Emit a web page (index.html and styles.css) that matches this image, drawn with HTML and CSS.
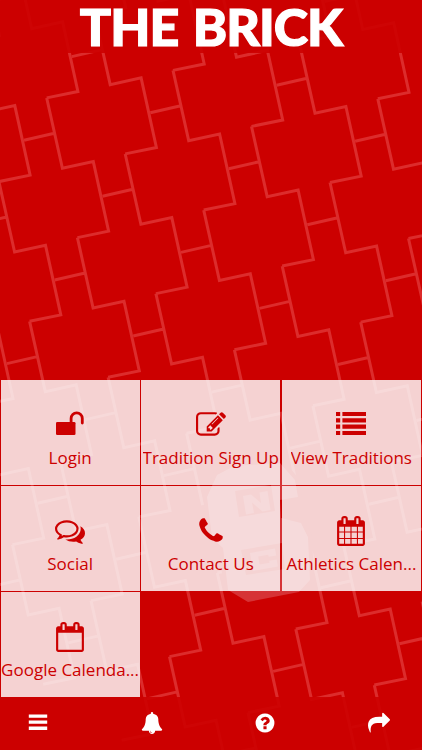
FILE: index.html
```
<!DOCTYPE html>
<html lang="en">
<head>
    <meta charset="UTF-8">
    <meta name="viewport" content="width=device-width, initial-scale=1.0">
    <title>The Brick</title>
    <link rel="stylesheet" href="styles.css">
</head>
<body>
    <div class="app">
        <!-- brick pattern -->
        <svg class="pattern" viewBox="0 0 422 750" aria-hidden="true">
            <defs>
                <path id="brick" d="M0 0l15.7 70.3 30.9-6.7 15.3 69.6-31.2 6.4M-22.7 42.3l30.4-7"/>
                <g id="chain">
                    <use href="#brick" x="-92.1" y="-419"/>
                    <use href="#brick" x="-61.4" y="-279.3"/>
                    <use href="#brick" x="-30.7" y="-139.7"/>
                    <use href="#brick"/>
                    <use href="#brick" x="30.7" y="139.7"/>
                    <use href="#brick" x="61.4" y="279.3"/>
                    <use href="#brick" x="92.1" y="419"/>
                    <use href="#brick" x="122.8" y="558.6"/>
                </g>
            </defs>
            <g class="lines">
                <use href="#chain" x="-188.8" y="-70.1"/>
                <use href="#chain" x="-110.3" y="-14"/>
                <use href="#chain" x="-31.8" y="42"/>
                <use href="#chain" x="46.7" y="98"/>
                <use href="#chain" x="125.2" y="154"/>
                <use href="#chain" x="203.7" y="210.1"/>
                <use href="#chain" x="282.2" y="266.1"/>
                <use href="#chain" x="360.7" y="322.2"/>
                <use href="#chain" x="439.2" y="378.2"/>
            </g>
            <path class="logo" d="M217 475L234 466 280 463 295 480 298 497 280 500 281 518 301 523 308 537 310 580 299 592 248 602 228 590 223 548 212 538 207 497Z"/>
            <path class="logo-cut" d="M235 491L271 485 275 511 239 517ZM241 550L282 543 285 569 246 575Z"/>
            <path class="logo-fill" d="M243 496l8-1.5 10 8.5-1.5-10.5 8-1.5 3 19-8 1.5-10.5-9 2 10.5-8 1.5zM250 553l25-4.5 1.2 7-7.5 1.3-.5-2-10 1.8 1.4 8 10-1.8-.4-2 7.5-1.3 1.2 7-25 4.5z"/>
        </svg>

        <header class="header">
            <h1>THE BRICK</h1>
        </header>

        <main class="menu">
            <a class="tile" href="#">
                <svg class="icon" viewBox="0 0 30 30"><rect x="1" y="12" width="19.5" height="13" rx="1.3"/><path d="M15.8 12.5V8.2a5.6 5.6 0 0 1 11.2 0v4.6" transform="translate(.3 .3)" fill="none" stroke="currentColor" stroke-width="2.8" stroke-linecap="round"/></svg>
                <span>Login</span>
            </a>
            <a class="tile" href="#">
                <svg class="icon" viewBox="0 0 1792 1792"><path d="M888 1184l116-116-152-152-116 116v56h96v96h56zm440-720q-16-16-33 1l-350 350q-17 17-1 33t33-1l350-350q17-17 1-33zm80 594v190q0 119-84.5 203.5t-203.5 84.5h-832q-119 0-203.5-84.5t-84.5-203.5v-832q0-119 84.5-203.5t203.5-84.5h832q63 0 117 25 15 7 18 23 3 17-9 29l-49 49q-14 14-32 8-23-6-45-6h-832q-66 0-113 47t-47 113v832q0 66 47 113t113 47h832q66 0 113-47t47-113v-126q0-13 9-22l64-64q15-15 35-7t20 29zm-96-738l288 288-672 672h-288v-288zm444 132l-92 92-288-288 92-92q28-28 68-28t68 28l152 152q28 28 28 68t-28 68z"/></svg>
                <span>Tradition Sign Up</span>
            </a>
            <a class="tile" href="#">
                <svg class="icon" viewBox="0 0 30 30"><path d="M0 2h4.2v4.1H0zM6.4 2H30v4.1H6.4zM0 8.3h4.2v4.1H0zM6.4 8.3H30v4.1H6.4zM0 14.6h4.2v4.1H0zM6.4 14.6H30v4.1H6.4zM0 20.9h4.2V25H0zM6.4 20.9H30V25H6.4z"/></svg>
                <span>View Traditions</span>
            </a>
            <a class="tile" href="#">
                <svg class="icon" viewBox="0 0 1792 1792"><path d="M704 384q-153 0-286 52t-211.5 141-78.5 191q0 82 53 158t149 132l97 56-35 84q34-20 62-39l44-31 53 10q78 14 153 14 153 0 286-52t211.5-141 78.5-191-78.5-191-211.5-141-286-52zm0-128q191 0 353.5 68.5t256.5 186.5 94 257-94 257-256.5 186.5-353.5 68.5q-86 0-176-16-124 88-278 128-36 9-86 16h-3q-11 0-20.5-8t-11.5-21q-1-3-1-6.5t.5-6.5 2-6l2.5-5 3.5-5.5 4-5 4.5-5 4-4.5q5-6 23-25t26-29.5 22.5-29 25-38.5 20.5-44q-124-72-195-177t-71-224q0-139 94-257t256.5-186.5 353.5-68.5zm822 1169q10 24 20.5 44t25 38.5 22.5 29 26 29.5 23 25q1 1 4 4.5t4.5 5 4 5 3.5 5.5l2.5 5 2 6 .5 6.5-1 6.5q-3 14-13 22t-22 7q-50-7-86-16-154-40-278-128-90 16-176 16-271 0-472-132 58 4 88 4 161 0 309-45t264-129q125-92 192-212t67-254q0-77-23-152 129 71 204 178t75 230q0 120-71 224.5t-195 176.5z"/></svg>
                <span>Social</span>
            </a>
            <a class="tile" href="#">
                <svg class="icon" viewBox="0 0 1792 1792"><path transform="translate(192 128)" d="M1408 1112q0 27-10 70.5t-21 68.5q-21 50-122 106-94 51-186 51-27 0-53-3.5t-57.5-12.5-47-14.5-55.5-20.5-49-18q-98-35-175-83-127-79-264-216t-216-264q-48-77-83-175-3-9-18-49t-20.5-55.5-14.5-47-12.5-57.5-3.5-53q0-92 51-186 56-101 106-122 25-11 68.5-21t70.5-10q14 0 21 3 18 6 53 76 11 19 30 54t35 63.5 31 53.5q3 4 17.5 25t21.5 35.5 7 28.5q0 20-28.5 50t-62 55-62 53-28.5 46q0 9 5 22.5t8.5 20.5 14 24 11.5 19q76 137 174 235t235 174q2 1 19 11.5t24 14 20.5 8.5 22.5 5q18 0 46-28.5t53-62 55-62 50-28.5q14 0 28.5 7t35.5 21.5 25 17.5q25 15 53.5 31t63.5 35 54 30q70 35 76 53 3 7 3 21z"/></svg>
                <span>Contact Us</span>
            </a>
            <a class="tile" href="#">
                <svg class="icon" viewBox="0 0 1792 1792"><path d="M192 1664h288v-288h-288v288zm352 0h320v-288h-320v288zm-352-352h288v-320h-288v320zm352 0h320v-320h-320v320zm-352-384h288v-288h-288v288zm736 736h320v-288h-320v288zm-384-736h320v-288h-320v288zm768 736h288v-288h-288v288zm-384-352h320v-320h-320v320zm-352-864v-288q0-13-9.5-22.5t-22.5-9.5h-64q-13 0-22.5 9.5t-9.5 22.5v288q0 13 9.5 22.5t22.5 9.5h64q13 0 22.5-9.5t9.5-22.5zm736 864h288v-320h-288v320zm-384-384h320v-288h-320v288zm384 0h288v-288h-288v288zm32-480v-288q0-13-9.5-22.5t-22.5-9.5h-64q-13 0-22.5 9.5t-9.5 22.5v288q0 13 9.5 22.5t22.5 9.5h64q13 0 22.5-9.5t9.5-22.5zm384-64v1280q0 52-38 90t-90 38h-1408q-52 0-90-38t-38-90v-1280q0-52 38-90t90-38h128v-96q0-66 47-113t113-47h64q66 0 113 47t47 113v96h384v-96q0-66 47-113t113-47h64q66 0 113 47t47 113v96h128q52 0 90 38t38 90z"/></svg>
                <span>Athletics Calen...</span>
            </a>
            <a class="tile" href="#">
                <svg class="icon" viewBox="0 0 1792 1792"><path d="M192 1664h1408v-1024h-1408v1024zm384-1216v-288q0-13-9.5-22.5t-22.5-9.5h-64q-13 0-22.5 9.5t-9.5 22.5v288q0 13 9.5 22.5t22.5 9.5h64q13 0 22.5-9.5t9.5-22.5zm768 0v-288q0-13-9.5-22.5t-22.5-9.5h-64q-13 0-22.5 9.5t-9.5 22.5v288q0 13 9.5 22.5t22.5 9.5h64q13 0 22.5-9.5t9.5-22.5zm384-64v1280q0 52-38 90t-90 38h-1408q-52 0-90-38t-38-90v-1280q0-52 38-90t90-38h128v-96q0-66 47-113t113-47h64q66 0 113 47t47 113v96h384v-96q0-66 47-113t113-47h64q66 0 113 47t47 113v96h128q52 0 90 38t38 90z"/></svg>
                <span>Google Calenda...</span>
            </a>
        </main>

        <footer class="footer">
            <a href="#"><svg viewBox="0 0 22 22"><path d="M1.8 2.4h18.4v3.3H1.8zM1.8 8.5h18.4v3.3H1.8zM1.8 14.6h18.4v3.3H1.8z"/></svg></a>
            <a href="#"><svg viewBox="0 0 1792 1792"><path d="M912 1696q0-16-16-16-59 0-101.5-42.5t-42.5-101.5q0-16-16-16t-16 16q0 73 51.5 124.5t124.5 51.5q16 0 16-16zm816-288q0 52-38 90t-90 38h-448q0 106-75 181t-181 75-181-75-75-181h-448q-52 0-90-38t-38-90q50-42 91-88t85-119.5 74.5-158.5 50-206 19.5-260q0-152 117-282.5t307-158.5q-8-19-8-39 0-40 28-68t68-28 68 28 28 68q0 20-8 39 190 28 307 158.5t117 282.5q0 139 19.5 260t50 206 74.5 158.5 85 119.5 91 88z"/></svg></a>
            <a href="#"><svg viewBox="0 0 1792 1792"><path d="M1024 1376v-192q0-14-9-23t-23-9h-192q-14 0-23 9t-9 23v192q0 14 9 23t23 9h192q14 0 23-9t9-23zm256-672q0-88-55.5-163t-138.5-116-170-41q-243 0-371 213-15 24 8 42l132 100q7 6 19 6 16 0 25-12 53-68 86-92 34-24 86-24 48 0 85.5 26t37.5 59q0 38-20 61t-68 45q-63 28-115.5 86.5t-52.5 125.5v36q0 14 9 23t23 9h192q14 0 23-9t9-23q0-19 21.5-49.5t54.5-49.5q32-18 49-28.5t46-35 44.5-48 28-60.5 12.5-81zm384 192q0 209-103 385.5t-279.5 279.5-385.5 103-385.5-103-279.5-279.5-103-385.5 103-385.5 279.5-279.5 385.5-103 385.5 103 279.5 279.5 103 385.5z"/></svg></a>
            <a href="#"><svg viewBox="0 0 1792 1792"><path d="M1792 640q0 26-19 45l-512 512q-19 19-45 19t-45-19-19-45v-256h-224q-98 0-175.5 6t-154 21.5-133 42.5-105.5 69.5-80 101-48.5 138.5-17.5 181q0 55 5 123 0 6 2.5 23.5t2.5 26.5q0 15-8.5 25t-23.5 10q-16 0-28-17-7-9-13-22t-13.5-30-10.5-24q-127-285-127-451 0-199 53-333 162-403 875-403h224v-256q0-26 19-45t45-19 45 19l512 512q19 19 19 45z"/></svg></a>
        </footer>
    </div>
</body>
</html>
```
FILE: styles.css
```
body, html {
    margin: 0;
    padding: 0;
    height: 100%;
    font-family: "Open Sans", "Noto Sans", sans-serif;
}

* {
    box-sizing: border-box;
}

.app {
    position: relative;
    display: flex;
    flex-direction: column;
    height: 750px;
    overflow: hidden;
    background: #cc0000;
}

/* background behind everything */
.pattern {
    position: absolute;
    top: 0;
    left: 0;
    width: 422px;
    height: 750px;
}

.lines {
    fill: none;
    stroke: #dc2c2c;
    stroke-width: 3;
}

.logo {
    fill: #d63336;
    stroke: #cc0000;
    stroke-width: 8;
    paint-order: stroke;
}

.logo-cut {
    fill: #cc0a0a;
}

.logo-fill {
    fill: #d63336;
}

.header {
    position: relative;
    height: 53px;
    background: rgba(204, 0, 0, 0.9);
    text-align: center;
}

.header h1 {
    margin: 0;
    color: #fff;
    font-family: Lato, sans-serif;
    font-size: 52px;
    font-weight: 900;
    letter-spacing: -1px;
    word-spacing: 3px;
    line-height: 52px;
    white-space: nowrap;
    -webkit-text-stroke: 1.2px #fff;
}

.menu {
    position: relative;
    display: grid;
    grid-template-columns: repeat(3, minmax(0, 1fr));
    grid-auto-rows: 105px;
    gap: 1px 1.5px;
    margin-top: auto;
    padding: 0 1px 0 0.5px;
}

.tile {
    display: flex;
    flex-direction: column;
    align-items: center;
    padding-top: 30px;
    background: rgba(252, 253, 253, 0.83);
    color: #cc0000;
    text-decoration: none;
}

.icon {
    width: 30px;
    height: 30px;
    fill: currentColor;
}

.tile span {
    max-width: 100%;
    margin-top: 5px;
    font-size: 17px;
    line-height: 25px;
    overflow: hidden;
    white-space: nowrap;
    text-overflow: ellipsis;
}

.footer {
    position: relative;
    display: flex;
    justify-content: space-between;
    align-items: center;
    height: 53px;
    padding: 0 32px 2px 27px;
    background: rgba(204, 0, 0, 0.9);
}

.footer a {
    display: flex;
    color: #fff;
}

.footer svg {
    width: 22px;
    height: 22px;
    fill: currentColor;
}
```
